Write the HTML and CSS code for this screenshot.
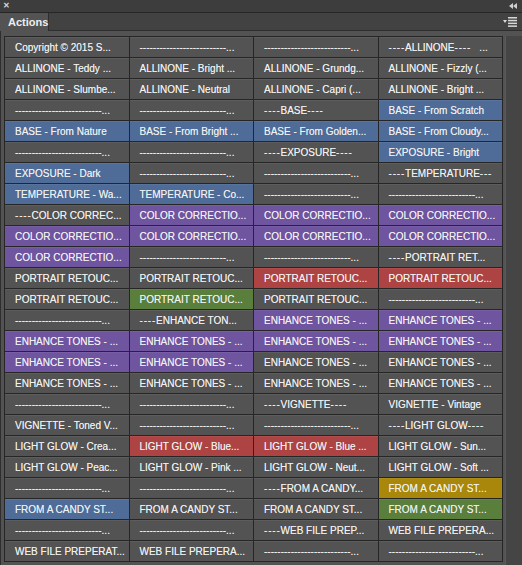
FILE: index.html
```html
<!DOCTYPE html>
<html>
<head>
<meta charset="utf-8">
<link rel="stylesheet" href="styles.css">
</head>
<body>
<div class="panel">
  <div class="titlebar">
    <span class="close">✕</span>
    <svg class="collapse" width="8" height="6" viewBox="0 0 8 6"><path d="M4 0 L0 3 L4 6 Z M8 0 L4 3 L8 6 Z" fill="#d0d0d0"/></svg>
  </div>
  <div class="tabbar">
    <div class="tab">Actions</div>
    <div class="tabfill">
      <svg class="menu" width="14" height="10" viewBox="0 0 14 10"><path d="M0 3 L4 3 L2 6 Z" fill="#d8d8d8"/><rect x="5" y="0" width="9" height="1.5" fill="#d8d8d8"/><rect x="5" y="2.8" width="9" height="1.5" fill="#d8d8d8"/><rect x="5" y="5.6" width="9" height="1.5" fill="#d8d8d8"/><rect x="5" y="8.4" width="9" height="1.5" fill="#d8d8d8"/></svg>
    </div>
  </div>
  <div class="body">
    <div class="grid">
      <div class="btn">Copyright © 2015 S...</div>
      <div class="btn">--------------------------...</div>
      <div class="btn">--------------------------...</div>
      <div class="btn"><span class="d">----</span>ALLINONE<span class="d">----</span>&nbsp;&nbsp; ...</div>

      <div class="btn">ALLINONE - Teddy ...</div>
      <div class="btn">ALLINONE - Bright ...</div>
      <div class="btn">ALLINONE - Grundg...</div>
      <div class="btn">ALLINONE - Fizzly (...</div>

      <div class="btn">ALLINONE - Slumbe...</div>
      <div class="btn">ALLINONE - Neutral</div>
      <div class="btn">ALLINONE - Capri (...</div>
      <div class="btn">ALLINONE - Bright ...</div>

      <div class="btn">--------------------------...</div>
      <div class="btn">--------------------------...</div>
      <div class="btn"><span class="d">----</span>BASE<span class="d">----</span></div>
      <div class="btn blue">BASE - From Scratch</div>

      <div class="btn blue">BASE - From Nature</div>
      <div class="btn blue">BASE - From Bright ...</div>
      <div class="btn blue">BASE - From Golden...</div>
      <div class="btn blue">BASE - From Cloudy...</div>

      <div class="btn">--------------------------...</div>
      <div class="btn">--------------------------...</div>
      <div class="btn"><span class="d">----</span>EXPOSURE<span class="d">----</span></div>
      <div class="btn blue">EXPOSURE - Bright</div>

      <div class="btn blue">EXPOSURE - Dark</div>
      <div class="btn">--------------------------...</div>
      <div class="btn">--------------------------...</div>
      <div class="btn"><span class="d">----</span>TEMPERATURE<span class="d">---</span></div>

      <div class="btn blue">TEMPERATURE - Wa...</div>
      <div class="btn blue">TEMPERATURE - Co...</div>
      <div class="btn">--------------------------...</div>
      <div class="btn">--------------------------...</div>

      <div class="btn"><span class="d">----</span>COLOR CORREC...</div>
      <div class="btn purple">COLOR CORRECTIO...</div>
      <div class="btn purple">COLOR CORRECTIO...</div>
      <div class="btn purple">COLOR CORRECTIO...</div>

      <div class="btn purple">COLOR CORRECTIO...</div>
      <div class="btn purple">COLOR CORRECTIO...</div>
      <div class="btn purple">COLOR CORRECTIO...</div>
      <div class="btn purple">COLOR CORRECTIO...</div>

      <div class="btn purple">COLOR CORRECTIO...</div>
      <div class="btn">--------------------------...</div>
      <div class="btn">--------------------------...</div>
      <div class="btn"><span class="d">----</span>PORTRAIT RET...</div>

      <div class="btn">PORTRAIT RETOUC...</div>
      <div class="btn">PORTRAIT RETOUC...</div>
      <div class="btn red">PORTRAIT RETOUC...</div>
      <div class="btn red">PORTRAIT RETOUC...</div>

      <div class="btn">PORTRAIT RETOUC...</div>
      <div class="btn green">PORTRAIT RETOUC...</div>
      <div class="btn">PORTRAIT RETOUC...</div>
      <div class="btn">--------------------------...</div>

      <div class="btn">--------------------------...</div>
      <div class="btn"><span class="d">----</span>ENHANCE TON...</div>
      <div class="btn purple">ENHANCE TONES - ...</div>
      <div class="btn purple">ENHANCE TONES - ...</div>

      <div class="btn purple">ENHANCE TONES - ...</div>
      <div class="btn purple">ENHANCE TONES - ...</div>
      <div class="btn purple">ENHANCE TONES - ...</div>
      <div class="btn purple">ENHANCE TONES - ...</div>

      <div class="btn purple">ENHANCE TONES - ...</div>
      <div class="btn purple">ENHANCE TONES - ...</div>
      <div class="btn">ENHANCE TONES - ...</div>
      <div class="btn">ENHANCE TONES - ...</div>

      <div class="btn">ENHANCE TONES - ...</div>
      <div class="btn">ENHANCE TONES - ...</div>
      <div class="btn">ENHANCE TONES - ...</div>
      <div class="btn">ENHANCE TONES - ...</div>

      <div class="btn">--------------------------...</div>
      <div class="btn">--------------------------...</div>
      <div class="btn"><span class="d">----</span>VIGNETTE<span class="d">----</span></div>
      <div class="btn">VIGNETTE - Vintage</div>

      <div class="btn">VIGNETTE - Toned V...</div>
      <div class="btn">--------------------------...</div>
      <div class="btn">--------------------------...</div>
      <div class="btn"><span class="d">----</span>LIGHT GLOW<span class="d">----</span></div>

      <div class="btn">LIGHT GLOW - Crea...</div>
      <div class="btn red">LIGHT GLOW - Blue...</div>
      <div class="btn red">LIGHT GLOW - Blue ...</div>
      <div class="btn">LIGHT GLOW - Sun...</div>

      <div class="btn">LIGHT GLOW - Peac...</div>
      <div class="btn">LIGHT GLOW - Pink ...</div>
      <div class="btn">LIGHT GLOW - Neut...</div>
      <div class="btn">LIGHT GLOW - Soft ...</div>

      <div class="btn">--------------------------...</div>
      <div class="btn">--------------------------...</div>
      <div class="btn"><span class="d">----</span>FROM A CANDY...</div>
      <div class="btn gold">FROM A CANDY ST...</div>

      <div class="btn blue">FROM A CANDY ST...</div>
      <div class="btn">FROM A CANDY ST...</div>
      <div class="btn">FROM A CANDY ST...</div>
      <div class="btn green">FROM A CANDY ST...</div>

      <div class="btn">--------------------------...</div>
      <div class="btn">--------------------------...</div>
      <div class="btn"><span class="d">----</span>WEB FILE PREP...</div>
      <div class="btn">WEB FILE PREPERA...</div>

      <div class="btn">WEB FILE PREPERAT...</div>
      <div class="btn">WEB FILE PREPERA...</div>
      <div class="btn">--------------------------...</div>
      <div class="btn">--------------------------...</div>
    </div>
    <div class="scroll"></div>
  </div>
</div>
</body>
</html>
```

FILE: styles.css
```css
html, body {
  margin: 0;
  padding: 0;
  background: #535353;
  width: 522px;
  height: 565px;
  overflow: hidden;
  font-family: "Liberation Sans", Arial, sans-serif;
}

.panel {
  display: flex;
  flex-direction: column;
  height: 565px;
}

.titlebar {
  height: 12px;
  background: #3d3d3d;
  border-bottom: 1px solid #262626;
  display: flex;
  align-items: center;
  justify-content: space-between;
  padding: 0 5px 0 3px;
}

.close {
  color: #d8d8d8;
  font-size: 8px;
  font-weight: bold;
  line-height: 8px;
}

.collapse {
  display: block;
}

.tabbar {
  height: 18px;
  display: flex;
  background: #424242;
}

.tab {
  width: 40px;
  padding-left: 8px;
  background: #535353;
  border-right: 1px solid #2e2e2e;
  color: #eeeeee;
  font-size: 11px;
  font-weight: bold;
  line-height: 18px;
}

.tabfill {
  flex: 1;
  display: flex;
  justify-content: flex-end;
  align-items: center;
  padding-right: 5px;
  border-bottom: 1px solid #2e2e2e;
}

.menu {
  display: block;
}

.body {
  flex: 1;
  display: flex;
  align-items: flex-start;
  padding: 5px 0 0 3px;
  border-left: 1px solid #2e2e2e;
  box-sizing: border-box;
  gap: 2px;
}

.grid {
  width: 499px;
  box-sizing: border-box;
  display: grid;
  grid-template-columns: repeat(4, 1fr);
  grid-auto-rows: 20px;
  gap: 1px;
  padding: 1px;
  background: #262626;
}

.btn {
  background: #535353;
  color: #f0f0f0;
  font-size: 10px;
  line-height: 20px;
  padding: 1px 0 0 10px;
  box-sizing: border-box;
  white-space: nowrap;
  overflow: hidden;
  text-shadow: 0 0 0.4px rgba(255, 255, 255, 0.6);
  box-shadow: inset 0 1px 0 rgba(255, 255, 255, 0.06);
}

.d {
  letter-spacing: 0.8px;
}

.blue { background: #4e6c97; }
.purple { background: #6f54a0; }
.red { background: #ae4343; }
.green { background: #5a7e3c; }
.gold { background: #a8870a; }

.scroll {
  flex: 1;
  align-self: stretch;
  background: #454545;
  border-left: 1px solid #5a5a5a;
}
```
